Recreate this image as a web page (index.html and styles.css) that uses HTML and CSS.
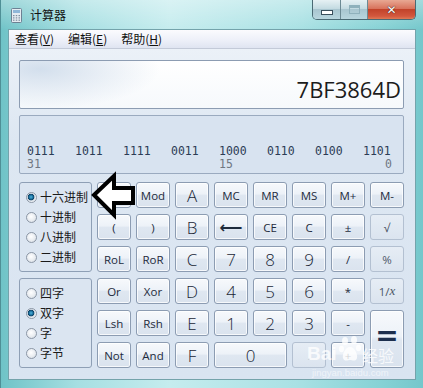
FILE: index.html
```html
<!DOCTYPE html>
<html lang="zh-CN">
  <head>
    <meta charset="UTF-8" />
    <title>计算器</title>
    <link rel="stylesheet" href="styles.css">
  </head>
  <body>
    <div class="window">
      <div class="titlebar">
        <svg class="app-icon" width="11" height="15" viewBox="0 0 11 15">
          <rect x="0.5" y="0.5" width="10" height="14" rx="1" fill="#e4ebf1" stroke="#6d8193" />
          <rect x="2" y="2" width="7" height="3" fill="#8fb7d8" />
          <g fill="#7d8e9e">
            <rect x="2" y="7" width="1.5" height="1.2" /><rect x="4.75" y="7" width="1.5" height="1.2" /><rect x="7.5" y="7" width="1.5" height="1.2" />
            <rect x="2" y="9.3" width="1.5" height="1.2" /><rect x="4.75" y="9.3" width="1.5" height="1.2" /><rect x="7.5" y="9.3" width="1.5" height="1.2" />
            <rect x="2" y="11.6" width="1.5" height="1.2" /><rect x="4.75" y="11.6" width="1.5" height="1.2" /><rect x="7.5" y="11.6" width="1.5" height="1.2" />
          </g>
        </svg>
        <span class="title">计算器</span>
        <div class="caption">
          <span class="cap-btn min"><i></i></span>
          <span class="cap-btn max"><i></i></span>
          <span class="cap-btn close">✕</span>
        </div>
      </div>

      <div class="client">
        <div class="menubar">
          <span>查看(<u>V</u>)</span>
          <span>编辑(<u>E</u>)</span>
          <span>帮助(<u>H</u>)</span>
        </div>

        <div class="content">
          <div class="display">7BF3864D</div>

          <div class="bits">
            <div class="bit-row">
              <span>0111</span><span>1011</span><span>1111</span><span>0011</span>
              <span>1000</span><span>0110</span><span>0100</span><span>1101</span>
            </div>
            <div class="bit-row labels">
              <span>31</span><span></span><span></span><span></span>
              <span>15</span><span></span><span></span><span class="right">0</span>
            </div>
          </div>

          <div class="keypad">
            <div class="group base">
              <div class="radio checked">十六进制</div>
              <div class="radio">十进制</div>
              <div class="radio">八进制</div>
              <div class="radio">二进制</div>
            </div>
            <div class="group size">
              <div class="radio">四字</div>
              <div class="radio checked">双字</div>
              <div class="radio">字</div>
              <div class="radio">字节</div>
            </div>

            <button class="key">Quot</button>
            <button class="key">Mod</button>
            <button class="key big">A</button>
            <button class="key">MC</button>
            <button class="key">MR</button>
            <button class="key">MS</button>
            <button class="key">M+</button>
            <button class="key">M-</button>

            <button class="key">(</button>
            <button class="key">)</button>
            <button class="key big">B</button>
            <button class="key arrow">&#x27F5;</button>
            <button class="key">CE</button>
            <button class="key">C</button>
            <button class="key">±</button>
            <button class="key off">√</button>

            <button class="key">RoL</button>
            <button class="key">RoR</button>
            <button class="key big">C</button>
            <button class="key big">7</button>
            <button class="key big">8</button>
            <button class="key big">9</button>
            <button class="key">/</button>
            <button class="key off">%</button>

            <button class="key">Or</button>
            <button class="key">Xor</button>
            <button class="key big">D</button>
            <button class="key big">4</button>
            <button class="key big">5</button>
            <button class="key big">6</button>
            <button class="key">*</button>
            <button class="key off">1/<em>x</em></button>

            <button class="key">Lsh</button>
            <button class="key">Rsh</button>
            <button class="key big">E</button>
            <button class="key big">1</button>
            <button class="key big">2</button>
            <button class="key big">3</button>
            <button class="key">-</button>
            <button class="key equals">=</button>

            <button class="key">Not</button>
            <button class="key">And</button>
            <button class="key big">F</button>
            <button class="key big zero">0</button>
            <button class="key off">.</button>
            <button class="key">+</button>
          </div>
        </div>
      </div>

      <!-- hand-drawn pointer over the Quot key -->
      <svg class="pointer" width="52" height="50" viewBox="0 0 52 50">
        <path d="M7 25 L27 6 L27 18 L46 18 L46 33 L27 33 L27 45 Z"
              fill="#fff" stroke="#000" stroke-width="4" stroke-linejoin="miter" />
      </svg>

      <div class="watermark">
        <span class="wm-bai">Bai</span>
        <svg class="wm-paw" width="22" height="28" viewBox="0 0 22 28">
          <g fill="rgba(255,255,255,0.8)">
            <ellipse cx="6" cy="6" rx="3" ry="4" />
            <ellipse cx="15" cy="5" rx="3" ry="4" />
            <ellipse cx="2.5" cy="14" rx="2.5" ry="3.2" />
            <ellipse cx="19.5" cy="13" rx="2.5" ry="3.2" />
            <path d="M11 12 C6 12 3 20 4 23 C5 27 9 25 11 25 C13 25 17 27 18 23 C19 20 16 12 11 12 Z" />
          </g>
        </svg>
        <span class="wm-jy">经验</span>
        <span class="wm-url">jingyan.baidu.com</span>
      </div>
    </div>
  </body>
</html>
```

FILE: styles.css
```css
body {
  margin: 0;
  padding: 0;
  background-color: #fff;
  font-family: "Open Sans", "Noto Sans CJK SC", sans-serif;
}

.window {
  position: relative;
  width: 423px;
  height: 388px;
  box-sizing: border-box;
  display: flex;
  flex-direction: column;
  border-left: 1px solid #4f8f96;
  background:
    linear-gradient(to bottom, rgba(255, 255, 255, 0.35), rgba(255, 255, 255, 0) 30px),
    linear-gradient(to right, #6fc3c7, #a6dfe2 18%, #c5ecee 40%, #a9e1e4 70%, #86d2d5 90%, #74c7cb);
}

.titlebar {
  height: 29px;
  display: flex;
  align-items: center;
  flex-shrink: 0;
}
.app-icon {
  margin-left: 10px;
  margin-top: 1px;
}
.title {
  margin-left: 8px;
  font-size: 12px;
  line-height: 16px;
  color: #111;
  font-family: "Noto Sans CJK SC", sans-serif;
}
.caption {
  margin-left: auto;
  margin-right: 7px;
  align-self: flex-start;
  display: flex;
  height: 19px;
  border: 1px solid #4a6a74;
  border-top: none;
  border-radius: 0 0 5px 5px;
  overflow: hidden;
}
.cap-btn {
  display: flex;
  align-items: center;
  justify-content: center;
  height: 19px;
  box-sizing: border-box;
}
.cap-btn.min,
.cap-btn.max {
  width: 28px;
  border-right: 1px solid #6c8a94;
  background: linear-gradient(to bottom, #e6f1f4, #c4dbe2 45%, #a9c6d0 50%, #b8d6de);
}
.cap-btn.max {
  width: 27px;
}
.cap-btn.min i {
  width: 10px;
  height: 3px;
  margin-top: 5px;
  background: #fff;
  border: 1px solid #3a4f5c;
}
.cap-btn.max i {
  width: 9px;
  height: 7px;
  margin-top: -1px;
  border: 1px solid #8fb1bc;
  box-shadow: inset 0 2px 0 #8fb1bc;
}
.cap-btn.close {
  width: 47px;
  color: #fff;
  font-family: "DejaVu Sans", sans-serif;
  font-weight: bold;
  font-size: 12px;
  text-shadow: 0 0 1px #3a1a14, 0 0 1px #3a1a14;
  background: linear-gradient(to bottom, #e8a893, #d8735c 45%, #c2432a 50%, #d3583e 85%, #e07a55);
}

.client {
  flex: 1;
  margin: 0 7px 8px 7px;
  border: 1px solid #74a3ab;
  display: flex;
  flex-direction: column;
  background: linear-gradient(to bottom, #eef3f9, #dde7f2 110px, #d9e4f1);
}

.menubar {
  height: 18px;
  display: flex;
  align-items: center;
  padding-left: 6px;
  border-bottom: 1px solid #c3cad8;
  background: linear-gradient(to bottom, #fbfbfe, #eceff8 60%, #dfe4f1);
  font-family: "Noto Sans CJK SC", sans-serif;
  font-size: 12px;
  line-height: 16px;
  color: #111;
}
.menubar span {
  margin-right: 14px;
}
.menubar u {
  text-underline-offset: 1px;
}

.content {
  padding: 11px 11px 0 10px;
}

.display {
  height: 49px;
  box-sizing: border-box;
  display: flex;
  align-items: flex-end;
  justify-content: flex-end;
  padding: 0 2px 8px 0;
  border: 1px solid #8c9cb2;
  border-radius: 2px;
  background:
    radial-gradient(ellipse 120px 40px at 20px 8px, rgba(200, 215, 232, 0.8), rgba(255, 255, 255, 0)),
    linear-gradient(to bottom, #ffffff, #f6f9fc);
  font-family: "Open Sans", sans-serif;
  font-size: 22px;
  line-height: 22px;
  color: #1c1c1c;
}

.bits {
  margin-top: 6px;
  height: 59px;
  box-sizing: border-box;
  display: flex;
  flex-direction: column;
  justify-content: flex-end;
  padding: 0 11px 2px 7px;
  border: 1px solid #9aaabf;
  border-radius: 2px;
  background-color: #d8e3f0;
  font-family: "DejaVu Sans Mono", monospace;
  font-size: 11.5px;
  line-height: 13px;
  color: #2c3c55;
}
.bit-row {
  display: flex;
  justify-content: space-between;
}
.bit-row span {
  width: 29px;
  white-space: nowrap;
}
.bit-row.labels {
  color: #6f7782;
}
.bit-row .right {
  text-align: right;
}

.keypad {
  margin-top: 8px;
  display: grid;
  grid-template-columns: 73px repeat(8, 34px);
  grid-auto-rows: 26px;
  column-gap: 5px;
  row-gap: 6px;
}

.group {
  grid-column: 1;
  box-sizing: border-box;
  padding: 4px 0 0 6px;
  border: 1px solid #8e9fb5;
  border-radius: 3px;
  background-color: #dbe5f1;
}
.group.base {
  grid-row: 1 / span 3;
}
.group.size {
  grid-row: 4 / span 3;
}
.radio {
  display: flex;
  align-items: center;
  height: 20px;
  font-family: "Noto Sans CJK SC", sans-serif;
  font-size: 12px;
  line-height: 14px;
  color: #1a1a1a;
}
.radio::before {
  content: "";
  width: 9px;
  height: 9px;
  margin-right: 3px;
  border: 1px solid #8c97a6;
  border-radius: 50%;
  background: radial-gradient(circle at 45% 40%, #ffffff, #e6eaef 60%, #cbd3dc);
}
.radio.checked::before {
  background: radial-gradient(circle at 45% 45%, #4fb4dc 0, #1a6f9e 2px, #0e3f60 3px, #cfd8e2 3.6px, #f6f8fa 5px);
}

.key {
  margin: 0;
  padding: 0;
  display: flex;
  align-items: center;
  justify-content: center;
  border: 1px solid #8c9cb2;
  border-radius: 3px;
  box-shadow: inset 0 0 0 1px rgba(255, 255, 255, 0.75);
  background: linear-gradient(to bottom, #f7f9fc, #edf2f8 45%, #dfe7f1 52%, #dae3ee);
  font-family: "Open Sans", sans-serif;
  font-size: 11.5px;
  color: #1e2b3c;
}
.key.big {
  font-size: 17px;
  font-weight: 300;
  color: #1a2636;
}
.key.arrow {
  font-family: "DejaVu Sans", sans-serif;
  font-size: 16px;
  font-weight: bold;
}
.key.off {
  border-color: #b3c0d1;
  box-shadow: none;
  background: linear-gradient(to bottom, #e6edf5, #dbe4ef);
  color: #4c5666;
}
.key.off em {
  font-family: "Liberation Serif", serif;
  font-size: 13px;
}
.key.equals {
  grid-row: span 2;
  padding-bottom: 8px;
  font-family: "DejaVu Sans", sans-serif;
  font-size: 28px;
  font-weight: bold;
  color: #1d2f4d;
}
.key.zero {
  grid-column: span 2;
}

.pointer {
  position: absolute;
  left: 86px;
  top: 170px;
}

.watermark {
  position: absolute;
  left: 303px;
  top: 333px;
  width: 100px;
  height: 50px;
  color: rgba(255, 255, 255, 0.8);
  pointer-events: none;
}
.wm-bai {
  position: absolute;
  left: 3px;
  top: 11px;
  font-family: "Liberation Sans", sans-serif;
  font-weight: bold;
  font-size: 19px;
  line-height: 20px;
}
.wm-paw {
  position: absolute;
  left: 35px;
  top: 2px;
}
.wm-jy {
  position: absolute;
  left: 58px;
  top: 13px;
  font-family: "Noto Sans CJK SC", sans-serif;
  font-size: 16px;
  line-height: 18px;
}
.wm-url {
  position: absolute;
  left: 8px;
  top: 34px;
  font-family: "Liberation Sans", sans-serif;
  font-size: 9.5px;
  line-height: 12px;
  color: rgba(255, 255, 255, 0.6);
}
```
